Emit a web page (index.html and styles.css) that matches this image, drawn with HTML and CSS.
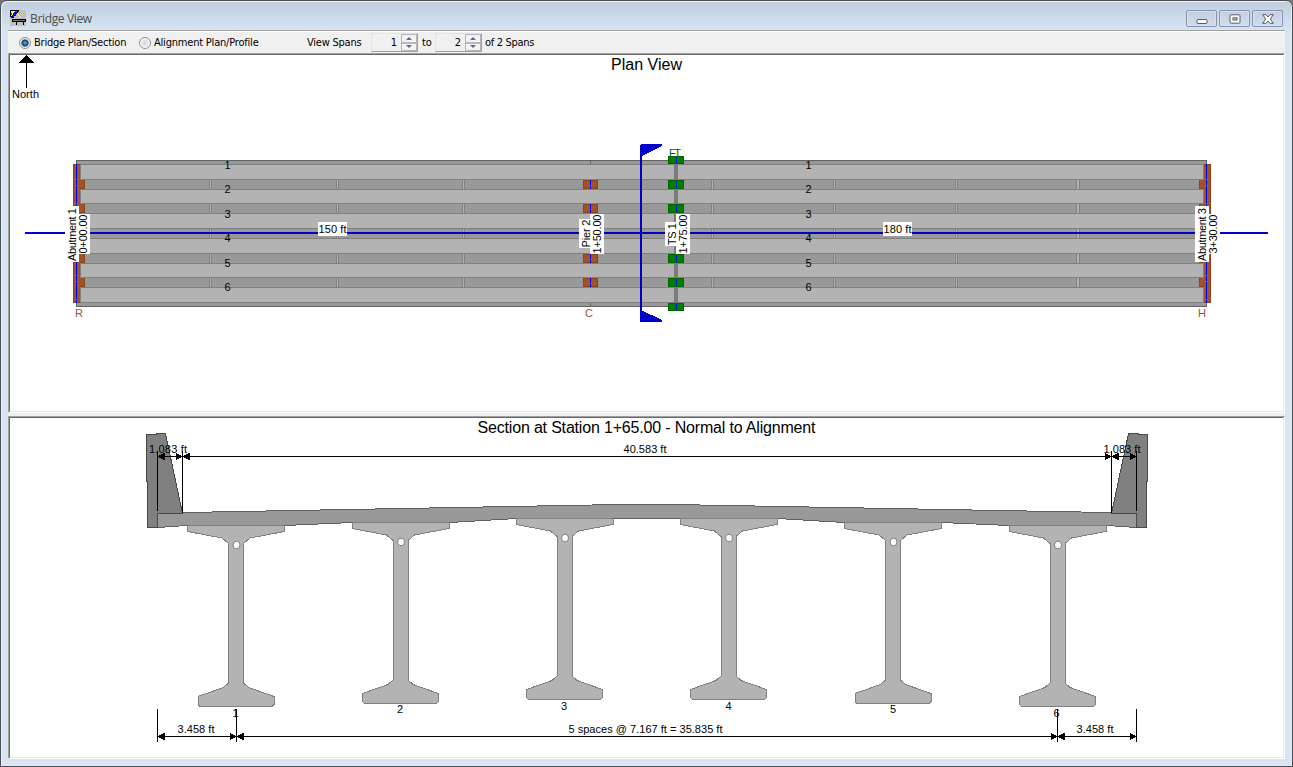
FILE: index.html
```html
<!DOCTYPE html>
<html lang="en">
<head>
<meta charset="utf-8">
<title>Bridge View</title>
<link rel="stylesheet" href="styles.css">
</head>
<body>
<div class="window">
  <header class="titlebar">
    <svg class="app-icon" width="16" height="16" viewBox="0 0 16 16" shape-rendering="crispEdges">
      <rect width="16" height="16" fill="#c0c0c0"/>
      <path d="M0 0h9v2H8v2H6v2H4v2H1V7H0z" fill="#000"/>
      <path d="M1 1h4v2H3v3H1z" fill="#ff0"/><path d="M3 1h1v1H3zM1 5h1v1H1z" fill="#fff"/>
      <path d="M4 2h3v2H6v2H4v1H2V5h1V3h1z" fill="#00f"/><path d="M5 1h2v1H5zM1 3h1v2H1z" fill="#008000"/>
      <path d="M7 3h1v1H7zM8 4h1v2H8zM9 6h1v1H9zM10 7h1v1h-1z" fill="#ff0"/>
      <path d="M2 9h14v3h-2v3h-1v-3H7v3H6v-3H2z" fill="#000"/><path d="M3 10h12v1H3z" fill="#777"/>
    </svg>
    <h1 class="title">Bridge View</h1>
    <div class="controls">
      <button class="control" aria-label="Minimize"><svg width="12" height="10" viewBox="0 0 12 10"><rect x="1" y="5.500" width="10" height="4" rx="1" fill="#fff" stroke="#555a68"/></svg></button>
      <button class="control" aria-label="Maximize"><svg width="12" height="10" viewBox="0 0 12 10"><rect x="1" y=".8" width="10" height="8.400" rx="1" fill="#fff" stroke="#555a68"/><rect x="4" y="3.800" width="4" height="2.200" fill="#c6d0e2" stroke="#555a68"/></svg></button>
      <button class="control" aria-label="Close"><svg width="12" height="10" viewBox="0 0 12 10"><path d="M.7 .7H4L6 3 8 .7h3.300L8.300 5l3 4.300H8L6 7 4 9.300H.7l3-4.300z" fill="#fff" stroke="#555a68" stroke-linejoin="round"/></svg></button>
    </div>
  </header>
  <main class="client">
    <div class="toolbar">
      <span class="radio on"></span><span class="label w-plan">Bridge Plan/Section</span>
      <span class="radio"></span><span class="label w-align">Alignment Plan/Profile</span>
      <span class="label w-view">View Spans</span>
      <span class="spin"><span class="value">1</span><span class="updown"><i class="up"></i><i class="down"></i></span></span>
      <span class="label w-to">to</span>
      <span class="spin"><span class="value">2</span><span class="updown"><i class="up"></i><i class="down"></i></span></span>
      <span class="label w-of">of 2 Spans</span>
    </div>
    <section class="pane plan">
      <svg class="drawing" width="1273" height="356" viewBox="10 55 1273 356">
        <defs>
          <g id="seams">
            <path d="M0 180v9M0 204v9M0 229v9M0 254v9M0 278v9" stroke="#808080" stroke-width="3"/>
            <path d="M0 180v9M0 204v9M0 229v9M0 254v9M0 278v9" stroke="#b3b3b3"/>
          </g>
          <g id="seams-wide">
            <path d="M0 180v9M0 204v9M0 229v9M0 254v9M0 278v9" stroke="#808080" stroke-width="4"/>
            <path d="M0 180v9M0 204v9M0 229v9M0 254v9M0 278v9" stroke="#b3b3b3" stroke-width="2"/>
          </g>
        </defs>
        <g shape-rendering="crispEdges">
          <path d="M26 55l8 8H18z"/><path d="M26.500 60v28" stroke="#000"/>
          <rect x="76.500" y="160.500" width="1130" height="146" fill="#999" stroke="#636363"/>
          <g fill="#a0522d" stroke="#8b4513">
            <path d="M73.500 164.500h7v15h4v9h-4v15h4v9h-4v41h4v9h-4v15h4v9h-4v16h-7z"/>
            <path d="M1210.500 164.500h-7v15h-4v9h4v15h-4v9h4v41h-4v9h4v15h-4v9h4v16h7z"/>
          </g>
          <g fill="#b3b3b3" stroke="#808080">
            <path d="M80.500 164.500h594v15h-594zM80.500 189.500h594v14h-594zM80.500 213.500h594v15h-594zM80.500 238.500h594v15h-594zM80.500 263.500h594v14h-594zM80.500 287.500h594v15h-594z"/>
            <path d="M677.500 164.500h526v15h-526zM677.500 189.500h526v14h-526zM677.500 213.500h526v15h-526zM677.500 238.500h526v15h-526zM677.500 263.500h526v14h-526zM677.500 287.500h526v15h-526z"/>
          </g>
          <path d="M76.500 160v4M76.500 303v4M1206.500 160v4M1206.500 303v4M590.500 161v3M590.500 303v3" stroke="#636363"/>
          <path d="M674 164h4v139h-4z" fill="#7c7c7c"/>
          <use href="#seams" x="210.500"/><use href="#seams" x="337.500"/><use href="#seams" x="463.500"/>
          <use href="#seams" x="712.500"/><use href="#seams" x="834.500"/><use href="#seams" x="956.500"/><use href="#seams-wide" x="1078"/>
          <path d="M76.500 164v139M1206.500 164v139" stroke="#00f" stroke-dasharray="17 1 5 1" stroke-dashoffset="2"/>
          <path d="M583.500 180.500h14v8h-14zM583.500 204.500h14v8h-14zM583.500 254.500h14v8h-14zM583.500 278.500h14v8h-14z" fill="#a0522d" stroke="#8b4513"/>
          <path d="M590.500 180v5m0 1v3M590.500 204v5m0 1v3M590.500 254v5m0 1v3M590.500 278v5m0 1v3" stroke="#00f"/>
        </g>
        <text class="green" x="669" y="157" textLength="12">FT</text>
        <g shape-rendering="crispEdges">
          <path d="M668.500 156.500h15v7h-15zM668.500 180.500h15v8h-15zM668.500 204.500h15v8h-15zM668.500 254.500h15v8h-15zM668.500 278.500h15v8h-15zM668.500 303.500h15v7h-15z" fill="#008000" stroke="#006400"/>
          <path d="M676.500 157v6M676.500 181v7M676.500 205v7M676.500 255v7M676.500 279v7M676.500 304v6" stroke="#00f"/>
          <g fill="#0000cd">
            <path d="M25 232h1243v2H25z"/><path d="M640 145h2v177h-2z"/>
            <path d="M641 144h21v2l-20 10h-1zM641 310l21 10v2h-21z"/>
          </g>
          <path d="M65 206h14v8h11v40H79v8H65zM579 219h11v-5h14v40h-14v-6h-11zM665 222h11v-8h14v40h-14v-8h-11zM1195 206h14v8h11v40h-11v8h-14zM318 222h29v14h-29zM883 222h29v14h-29z" fill="#fff"/>
        </g>
        <g class="middle">
          <text x="25.500" y="98" textLength="27">North</text>
          <text x="332.500" y="233" textLength="28">150 ft</text>
          <text x="897.500" y="233" textLength="28">180 ft</text>
          <text x="227.500" y="169">1</text><text x="227.500" y="193">2</text><text x="227.500" y="218">3</text>
          <text x="227.500" y="242">4</text><text x="227.500" y="267">5</text><text x="227.500" y="291">6</text>
          <text x="808.500" y="169">1</text><text x="808.500" y="193">2</text><text x="808.500" y="218">3</text>
          <text x="808.500" y="242">4</text><text x="808.500" y="267">5</text><text x="808.500" y="291">6</text>
          <text transform="translate(76 234.500) rotate(-90)" textLength="53">Abutment 1</text>
          <text transform="translate(87 234) rotate(-90)" textLength="39">0+00.00</text>
          <text transform="translate(590 233.500) rotate(-90)" textLength="28">Pier 2</text>
          <text transform="translate(601 234) rotate(-90)" textLength="39">1+50.00</text>
          <text transform="translate(676 234) rotate(-90)" textLength="22">TS 1</text>
          <text transform="translate(687 234) rotate(-90)" textLength="39">1+75.00</text>
          <text transform="translate(1206 234.500) rotate(-90)" textLength="53">Abutment 3</text>
          <text transform="translate(1217 234) rotate(-90)" textLength="39">3+30.00</text>
          <text class="brown" x="79" y="317">R</text><text class="brown" x="589" y="317">C</text><text class="brown" x="1202" y="317">H</text>
          <text class="heading" x="646.500" y="70" textLength="71">Plan View</text>
        </g>
      </svg>
    </section>
    <section class="pane section">
      <svg class="drawing" width="1273" height="339" viewBox="10 418 1273 339">
        <defs>
          <g id="girder">
            <path d="M-48.500 525.500h97v6L14 538l-6.500 5.500V683l5 4.500 25.500 9v8l-2 2h-72l-2-2v-8l25.500-9 5-4.500V543.500L-14 538l-34.500-6.500z" fill="#b3b3b3" stroke="#808080"/>
            <ellipse cx=".5" cy="545" rx="3.500" ry="3.800" fill="#fff" stroke="#808080" shape-rendering="auto"/>
          </g>
          <path id="head-left" d="M0 0l7-4v8z"/>
          <path id="head-right" d="M0 0l-7-4v8z"/>
        </defs>
        <g shape-rendering="crispEdges">
          <path d="M157.500 513.500L185 512.500L619 504.500H673L1108 512.500L1136.500 513.500V527.500L1107 525.500H1009L942 522.500H844L778 518.500H516L450 522.500H352L285 525.500H187L157.500 527.500z" fill="#999" stroke="#606060"/>
          <use href="#girder" x="236"/><use href="#girder" x="400.500" y="-3"/><use href="#girder" x="564.500" y="-7"/>
          <use href="#girder" x="728.500" y="-7"/><use href="#girder" x="893" y="-3"/><use href="#girder" x="1057.500"/>
          <g fill="#808080" stroke="#484848">
            <path d="M146.500 434.500h9.500v-1h9.500l17 80h-25v14h-10v-46h-1z"/>
            <path d="M1147.500 434.500h-9.500v-1h-9.500l-17 80h25v14h10v-46h1z"/>
          </g>
          <path d="M157.500 451v60M182.500 451v62M1111.500 451v62M1136.500 451v60M157 456.500h980M157.500 709v33M236.500 709v33M1057.500 709v33M1136.500 709v33M157 736.500h980" stroke="#000"/>
          <use href="#head-left" x="157.500" y="456.500"/><use href="#head-right" x="182.500" y="456.500"/><use href="#head-left" x="182.500" y="456.500"/>
          <use href="#head-right" x="1111.500" y="456.500"/><use href="#head-left" x="1111.500" y="456.500"/><use href="#head-right" x="1136.500" y="456.500"/>
          <use href="#head-left" x="157.500" y="736.500"/><use href="#head-right" x="236.500" y="736.500"/><use href="#head-left" x="236.500" y="736.500"/>
          <use href="#head-right" x="1057.500" y="736.500"/><use href="#head-left" x="1057.500" y="736.500"/><use href="#head-right" x="1136.500" y="736.500"/>
        </g>
        <g class="middle">
          <text class="heading" x="646.500" y="433" textLength="338">Section at Station 1+65.00 - Normal to Alignment</text>
          <text x="168" y="453" textLength="38">1.083 ft</text><text x="645" y="453" textLength="43">40.583 ft</text><text x="1122" y="453" textLength="37">1.083 ft</text>
          <text x="196" y="733" textLength="37">3.458 ft</text><text x="645.500" y="733" textLength="154">5 spaces @ 7.167 ft = 35.835 ft</text><text x="1095" y="733" textLength="37">3.458 ft</text>
          <text x="235.500" y="717">1</text><text x="400" y="713">2</text><text x="564" y="710">3</text><text x="728.500" y="710">4</text><text x="893" y="713">5</text><text x="1056.500" y="717">6</text>
        </g>
      </svg>
    </section>
  </main>
</div>
</body>
</html>
```
FILE: styles.css
```css
* { box-sizing: border-box; }
html { background: #77747a; }
body { margin: 0; }
.window {
  width: 1293px; height: 767px; overflow: hidden;
  display: flex; flex-direction: column;
  padding: 0 7px 7px;
  border: 1px solid #4a4c50; border-radius: 7px 7px 0 0;
  background: linear-gradient(#bfcddd 0, #d7e4f2 30px) no-repeat, #d7e4f2;
  box-shadow: inset 1px 1px 0 #eef4fa, inset -1px -1px 0 #d8f0f8;
}
.titlebar { display: flex; align-items: flex-start; height: 29px; }
.app-icon { margin: 9px 0 0 2px; }
.title {
  margin: 9px auto 0 4px;
  font: 12px/18px "Open Sans", "Noto Sans", sans-serif;
  letter-spacing: -.35px; color: #4c4c4c;
}
.controls { display: flex; gap: 2px; margin: 9px 2px 0 0; }
.control {
  display: flex; align-items: center; justify-content: center;
  width: 31px; height: 17px; padding: 0;
  border: 1px solid #8493b2; border-radius: 2px;
  background: linear-gradient(#c3cfdf, #d1ddeb);
  box-shadow: inset 0 0 0 1px #d7e1ee;
}
.client { display: flex; flex-direction: column; width: 1277px; height: 729px; background: #f0f0f0; }
.toolbar {
  display: flex; align-items: center; height: 23px; padding: 1px 0 0 11px;
  border-top: 1px solid #a0a0a0; box-shadow: inset 0 1px #fff;
  font: 11px/14px "DejaVu Sans Condensed", "DejaVu Sans", sans-serif;
  font-stretch: semi-condensed; color: #000;
}
.label { flex: none; white-space: nowrap; letter-spacing: -.23px; }
.w-plan { width: 105px; }
.w-align { width: 153px; letter-spacing: -.2px; }
.w-view { width: 64px; }
.w-to { width: 13px; }
.w-of { letter-spacing: -.3px; }
.radio {
  flex: none; width: 12px; height: 12px; margin-right: 3px;
  border: 1px solid #8e8f8f; border-radius: 50%;
  background: radial-gradient(circle, #d9dcdf 20%, #fff 80%);
}
.radio.on { background: radial-gradient(circle at 50% 50%, #63b9df 0, #123f63 3px, #e8ecf0 4.2px, #fff 100%); }
.spin {
  display: flex; flex: none; width: 47px; height: 19px; margin-right: 3px;
  border-left: 1px solid #e3e3ee; border-top: 1px solid #e3e3ee;
  border-right: 1px solid #a0a0a5; border-bottom: 1px solid #a0a0a5;
}
.w-view + .spin { margin-right: 4px; }
.value { width: 25px; line-height: 18px; text-align: right; }
.updown { display: flex; flex-direction: column; width: 16px; height: 17px; margin-left: auto; border: 1px solid #b5b5ba; }
.updown i { flex: 1; display: flex; align-items: center; justify-content: center; background: #f2f2f2; }
.up { border-bottom: 1px solid #b5b5ba; }
.down { border-top: 1px solid #b5b5ba; }
.updown i::before { content: ""; border: 3px solid transparent; }
.updown .up::before { border-top-width: 0; border-bottom-color: #5265a5; }
.updown .down::before { border-bottom-width: 0; border-top-color: #5265a5; }
.pane {
  display: flex; flex: none; width: 1277px; background: #fff;
  border: 1px solid; border-color: #a0a0a0 #fff #fff #a0a0a0;
}
.plan { height: 360px; }
.section { height: 343px; margin-top: 3px; }
.drawing { display: block; box-sizing: content-box; border: 1px solid; border-color: #696969 #e8e8e8 #e8e8e8 #696969; }
.drawing text { font: 11px "Liberation Sans", Arial, sans-serif; fill: #000; }
.drawing text.heading { font-size: 16px; }
.drawing text.brown { fill: #a0522d; }
.drawing text.green { fill: #006400; }
.middle { text-anchor: middle; }
```
